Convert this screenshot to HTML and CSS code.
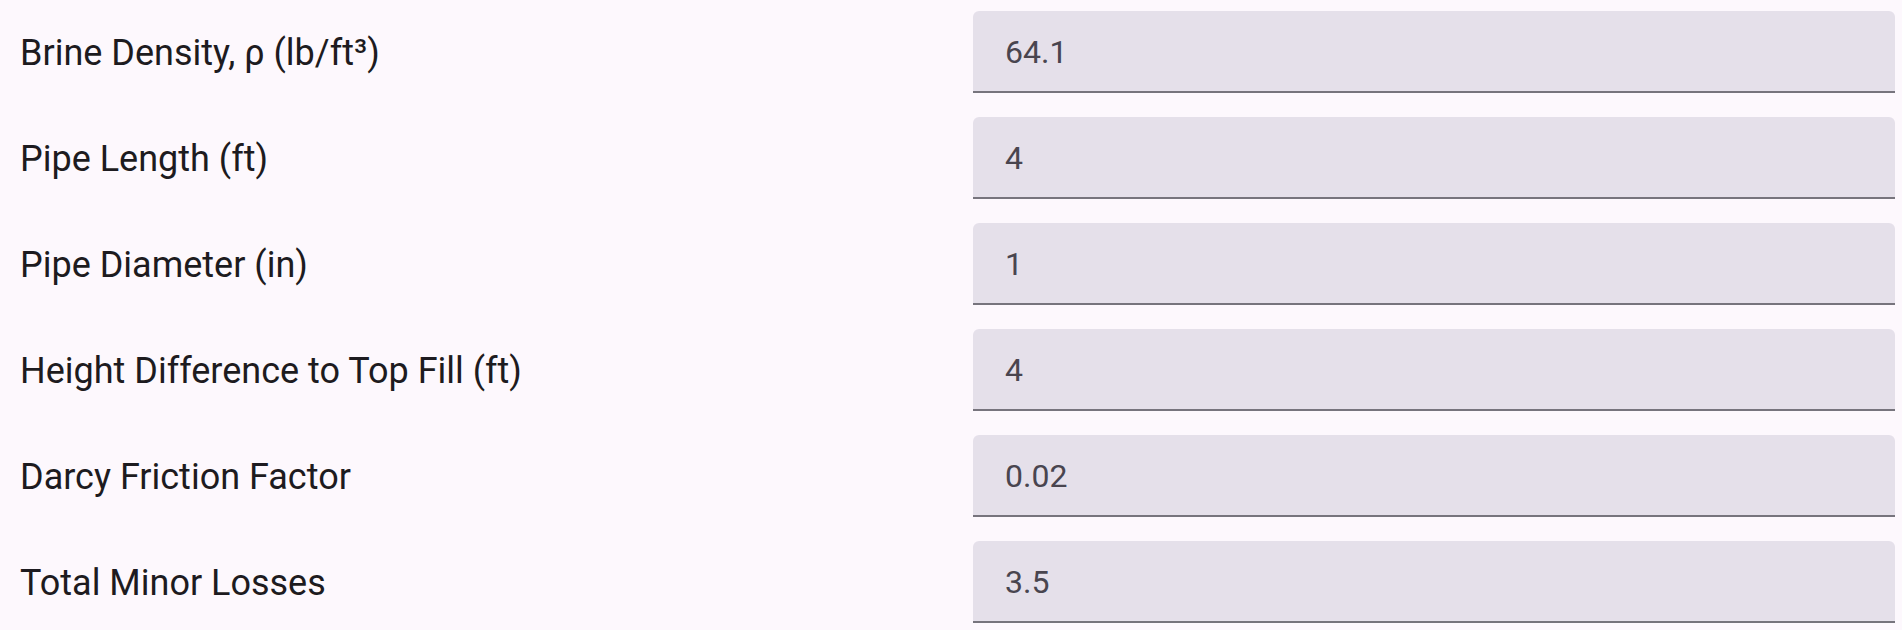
FILE: index.html
```html
<!DOCTYPE html>
<html lang="en">
<head>
<meta charset="utf-8">
<title>Brine Calculator Inputs</title>
<link rel="stylesheet" href="styles.css">
</head>
<body>
<main class="form">
  <div class="row">
    <label class="label" for="f1">Brine Density, ρ (lb/ft³)</label>
    <div class="field"><input id="f1" class="input" type="text" value="64.1"></div>
  </div>
  <div class="row">
    <label class="label" for="f2">Pipe Length (ft)</label>
    <div class="field"><input id="f2" class="input" type="text" value="4"></div>
  </div>
  <div class="row">
    <label class="label" for="f3">Pipe Diameter (in)</label>
    <div class="field"><input id="f3" class="input" type="text" value="1"></div>
  </div>
  <div class="row">
    <label class="label" for="f4">Height Difference to Top Fill (ft)</label>
    <div class="field"><input id="f4" class="input" type="text" value="4"></div>
  </div>
  <div class="row">
    <label class="label" for="f5">Darcy Friction Factor</label>
    <div class="field"><input id="f5" class="input" type="text" value="0.02"></div>
  </div>
  <div class="row">
    <label class="label" for="f6">Total Minor Losses</label>
    <div class="field"><input id="f6" class="input" type="text" value="3.5"></div>
  </div>
</main>
</body>
</html>
```
FILE: styles.css
```css
html, body {
  margin: 0;
  padding: 0;
  background: #fdf8fd;
  overflow: hidden;
}

.form {
  display: flex;
  flex-direction: column;
  gap: 24px;
  padding: 11px 7px 0 20px;
  font-family: Roboto, "Noto Sans", sans-serif;
}

.row {
  display: grid;
  grid-template-columns: 1fr 922px;
  align-items: center;
}

.label {
  font-size: 36px;
  color: #1d1b20;
  line-height: 1;
  padding-top: 2px;
}

.field {
  height: 80px;
  background: #e5e0ea;
  border-radius: 6px 6px 0 0;
  border-bottom: 2px solid #77747d;
  display: flex;
  align-items: center;
  padding-left: 32px;
}

.input {
  border: none;
  outline: none;
  background: transparent;
  font-family: Roboto, "Noto Sans", sans-serif;
  font-size: 32px;
  color: #49454f;
  padding: 2px 0 0;
  margin: 0;
  width: 100%;
}
```
